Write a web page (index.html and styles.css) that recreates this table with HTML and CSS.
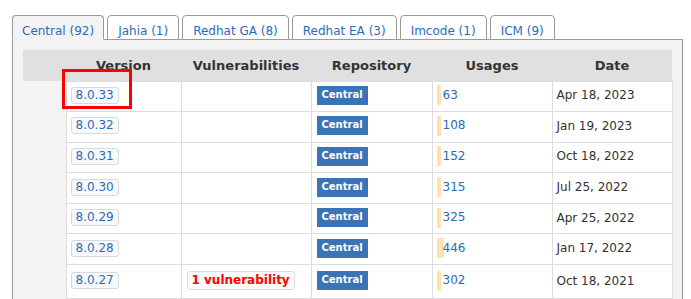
FILE: index.html
```html
<!DOCTYPE html>
<html>
<head>
<meta charset="utf-8">
<link rel="stylesheet" href="styles.css">
</head>
<body>
<div class="page">
  <ul class="tabs">
    <li class="tab active"><a href="#">Central (92)</a></li>
    <li class="tab"><a href="#">Jahia (1)</a></li>
    <li class="tab"><a href="#">Redhat GA (8)</a></li>
    <li class="tab"><a href="#">Redhat EA (3)</a></li>
    <li class="tab"><a href="#">Imcode (1)</a></li>
    <li class="tab"><a href="#">ICM (9)</a></li>
  </ul>
  <div class="panel">
    <table class="versions">
      <colgroup>
        <col class="c-grp"><col class="c-ver"><col class="c-vul"><col class="c-repo"><col class="c-use"><col class="c-date">
      </colgroup>
      <thead>
        <tr><th></th><th>Version</th><th>Vulnerabilities</th><th>Repository</th><th>Usages</th><th>Date</th></tr>
      </thead>
      <tbody>
        <tr>
          <td class="grp" rowspan="7"></td>
          <td><a class="vbtn" href="#">8.0.33</a></td>
          <td></td>
          <td><span class="repo">Central</span></td>
          <td><div class="use"><span class="bar" style="width:4px"></span><a href="#">63</a></div></td>
          <td>Apr 18, 2023</td>
        </tr>
        <tr>
          <td><a class="vbtn" href="#">8.0.32</a></td>
          <td></td>
          <td><span class="repo">Central</span></td>
          <td><div class="use"><span class="bar" style="width:4px"></span><a href="#">108</a></div></td>
          <td>Jan 19, 2023</td>
        </tr>
        <tr>
          <td><a class="vbtn" href="#">8.0.31</a></td>
          <td></td>
          <td><span class="repo">Central</span></td>
          <td><div class="use"><span class="bar" style="width:4px"></span><a href="#">152</a></div></td>
          <td>Oct 18, 2022</td>
        </tr>
        <tr>
          <td><a class="vbtn" href="#">8.0.30</a></td>
          <td></td>
          <td><span class="repo">Central</span></td>
          <td><div class="use"><span class="bar" style="width:4px"></span><a href="#">315</a></div></td>
          <td>Jul 25, 2022</td>
        </tr>
        <tr>
          <td><a class="vbtn" href="#">8.0.29</a></td>
          <td></td>
          <td><span class="repo">Central</span></td>
          <td><div class="use"><span class="bar" style="width:4px"></span><a href="#">325</a></div></td>
          <td>Apr 25, 2022</td>
        </tr>
        <tr>
          <td><a class="vbtn" href="#">8.0.28</a></td>
          <td></td>
          <td><span class="repo">Central</span></td>
          <td><div class="use"><span class="bar" style="width:7px"></span><a href="#">446</a></div></td>
          <td>Jan 17, 2022</td>
        </tr>
        <tr>
          <td><a class="vbtn" href="#">8.0.27</a></td>
          <td><a class="vuln" href="#">1 vulnerability</a></td>
          <td><span class="repo">Central</span></td>
          <td><div class="use"><span class="bar" style="width:4px"></span><a href="#">302</a></div></td>
          <td>Oct 18, 2021</td>
        </tr>
      </tbody>
    </table>
  </div>
  <div class="highlight"></div>
</div>
</body>
</html>
```

FILE: styles.css
```css
* { box-sizing: border-box; }

html, body { margin: 0; background: #fff; }

body {
  font-family: "DejaVu Sans", Verdana, sans-serif;
  font-size: 12px;
  color: #333;
}

a { color: #2b6cb8; text-decoration: none; }

.page {
  position: relative;
  padding: 15px 8px 0 12px;
}

.tabs {
  display: flex;
  gap: 3px;
  list-style: none;
  margin: 0 0 -1px;
  padding: 0;
  position: relative;
  z-index: 1;
}

.tab {
  border: 1px solid #9a9a9a;
  border-radius: 4px 4px 0 0;
  padding: 8px 10px 0;
  line-height: 15px;
  background: #fff;
}

.tab:first-child { padding: 8px 9px 0; }

.tab.active {
  background: #f3f3f3;
  border-bottom-color: #f3f3f3;
}

.panel {
  border: 1px solid #9a9a9a;
  background: #f3f3f3;
  padding: 10px;
}

.versions {
  width: 100%;
  border-collapse: collapse;
  table-layout: fixed;
}

.c-grp { width: 43px; }
.c-ver { width: 115px; }
.c-vul { width: 130px; }
.c-repo { width: 121px; }
.c-use { width: 120px; }
.c-date { width: 120px; }

.versions th {
  background: #e0e0e0;
  font-size: 13px;
  font-weight: bold;
  color: #333;
  height: 31px;
  padding: 0;
  text-align: center;
  vertical-align: middle;
}

.versions td {
  background: #fff;
  border: 1px solid #dddddd;
  height: 30.6px;
  padding: 0 4px 2px;
  vertical-align: middle;
  white-space: nowrap;
}

.versions td.grp {
  background: transparent;
  border: none;
}

.vbtn {
  display: inline-block;
  border: 1px solid #d9d9d9;
  border-radius: 3px;
  background: #f8f9fd;
  padding: 0 4px 1px;
  line-height: 14px;
}

.vuln {
  display: inline-block;
  border: 1px solid #dcdcdc;
  border-radius: 3px;
  background: #fafafa;
  color: #f00;
  font-weight: bold;
  padding: 1px 4px;
  line-height: 15px;
  margin: 6px 0 6px 1px;
}

.repo {
  display: inline-block;
  background: #3b73b7;
  color: #fff;
  font-size: 10px;
  font-weight: bold;
  padding: 2px 5px 4px;
  line-height: 13px;
  margin-left: 1px;
}

.use {
  position: relative;
  display: flex;
  align-items: center;
  height: 20px;
  padding-left: 6px;
}

.use .bar {
  position: absolute;
  left: 0;
  top: 0;
  bottom: 0;
  background: #ffe2b2;
}

.use a {
  position: relative;
  line-height: 15px;
}

.highlight {
  position: absolute;
  left: 62px;
  top: 69px;
  width: 70px;
  height: 40px;
  border: 3px solid #f00;
}
```
